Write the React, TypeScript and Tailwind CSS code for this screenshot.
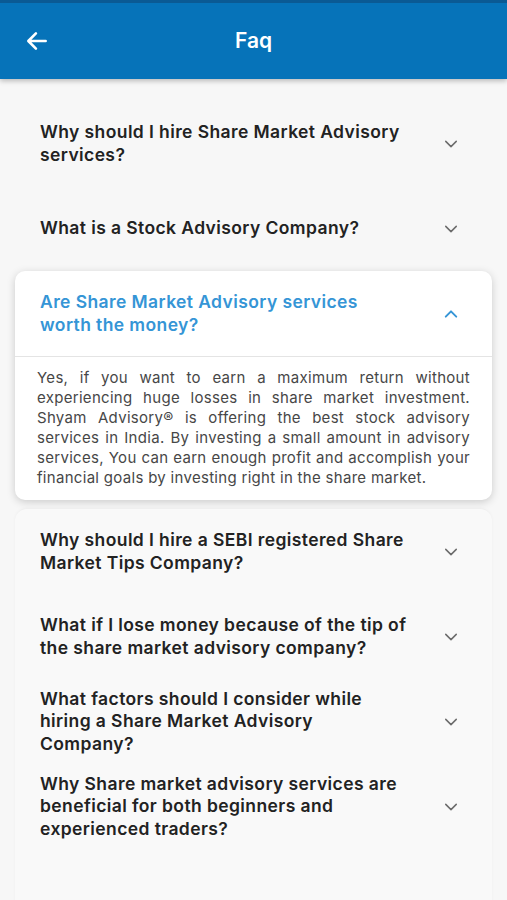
import React, { useState } from 'react';

const faqs = [
  {
    q: 'Why should I hire Share Market Advisory services?',
    a: '',
  },
  {
    q: 'What is a Stock Advisory Company?',
    a: '',
  },
  {
    q: 'Are Share Market Advisory services worth the money?',
    a: 'Yes, if you want to earn a maximum return without experiencing huge losses in share market investment. Shyam Advisory® is offering the best stock advisory services in India. By investing a small amount in advisory services, You can earn enough profit and accomplish your financial goals by investing right in the share market.',
  },
  {
    q: 'Why should I hire a SEBI registered Share Market Tips Company?',
    a: '',
  },
  {
    q: 'What if I lose money because of the tip of the share market advisory company?',
    a: '',
  },
  {
    q: 'What factors should I consider while hiring a Share Market Advisory Company?',
    a: '',
  },
  {
    q: 'Why Share market advisory services are beneficial for both beginners and experienced traders?',
    a: '',
  },
];

function Chevron({ up, className }: { up?: boolean; className?: string }) {
  return (
    <svg width="18" height="18" viewBox="0 0 24 24" fill="none" className={className}>
      <path
        d={up ? 'M5 15.5l7-7 7 7' : 'M5 8.5l7 7 7-7'}
        stroke="currentColor"
        strokeWidth={up ? 2.6 : 2}
        strokeLinecap="round"
        strokeLinejoin="round"
      />
    </svg>
  );
}

function Row({
  q,
  isOpen,
  onToggle,
}: {
  q: string;
  isOpen: boolean;
  onToggle: () => void;
}) {
  return (
    <button onClick={onToggle} className="flex h-[85px] w-full items-center text-left">
      <span
        className={
          'ml-[25px] w-[367px] text-[17.5px] font-semibold leading-[22.5px] tracking-[0.4px] ' +
          (isOpen ? 'text-[#3595d6]' : 'text-[#222222]')
        }
      >
        {q}
      </span>
      <span className="ml-auto mr-[32px] flex">
        <Chevron up={isOpen} className={isOpen ? 'text-[#3595d6]' : 'text-[#6b6b6b]'} />
      </span>
    </button>
  );
}

export default function App() {
  const [open, setOpen] = useState<number>(2);
  const toggle = (i: number) => setOpen(open === i ? -1 : i);

  const before = open >= 0 ? faqs.slice(0, open) : faqs;
  const after = open >= 0 ? faqs.slice(open + 1) : [];

  return (
    <div
      className="min-h-[900px] bg-[#f7f7f7]"
      style={{ fontFamily: 'Inter, "Noto Sans", sans-serif' }}
    >
      <header className="border-t-[3px] border-[#0a5a94] bg-[#0673b9] shadow-[0_2px_5px_rgba(0,0,0,0.25)]">
        <div className="relative flex h-[76px] items-center justify-center">
          <button className="absolute left-[24px] top-[25px] text-white">
            <svg width="26" height="26" viewBox="0 0 24 24" fill="none">
              <path
                d="M20 12H4.5M11 5l-7 7 7 7"
                stroke="currentColor"
                strokeWidth="2.4"
                strokeLinecap="round"
                strokeLinejoin="round"
              />
            </svg>
          </button>
          <h1 className="text-[21px] font-semibold text-white">Faq</h1>
        </div>
      </header>

      <div className="px-[15px] pt-[22px]">
        <div>
          {before.map((f, i) => (
            <Row key={i} q={f.q} isOpen={false} onToggle={() => toggle(i)} />
          ))}
        </div>

        {open >= 0 && (
          <div className="mb-[9px] overflow-hidden rounded-[10px] bg-white shadow-[0_2px_8px_rgba(0,0,0,0.18)]">
            <Row q={faqs[open].q} isOpen onToggle={() => toggle(open)} />
            <div className="border-t border-[#e4e4e4] px-[22px] pb-[12px] pt-[11px]">
              <p className="text-justify text-[15px] leading-[20px] tracking-[0.3px] text-[#474747]">
                {faqs[open].a}
              </p>
            </div>
          </div>
        )}

        {after.length > 0 && (
          <div className="rounded-t-[12px] bg-[#f9f9f9] pb-[60px] shadow-[0_-1px_3px_rgba(0,0,0,0.04)]">
            {after.map((f, k) => {
              const i = open + 1 + k;
              return <Row key={i} q={f.q} isOpen={false} onToggle={() => toggle(i)} />;
            })}
          </div>
        )}
      </div>
    </div>
  );
}
